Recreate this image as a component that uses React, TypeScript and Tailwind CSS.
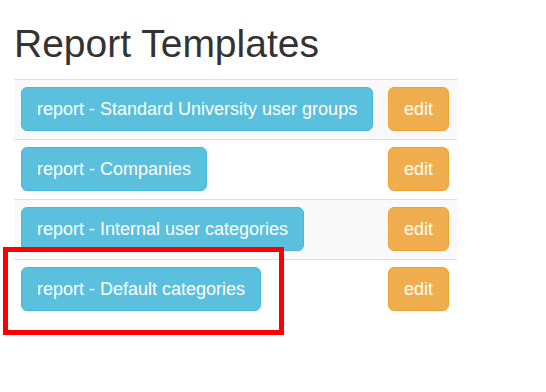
import React from 'react';

const templates = [
  'report - Standard University user groups',
  'report - Companies',
  'report - Internal user categories',
  'report - Default categories',
];

export default function App() {
  return (
    <div className="relative w-[546px] h-[392px] bg-white font-['Liberation_Sans',Arial,sans-serif] text-[#333]">
      <div className="pl-[14px]">
        <h1 className="pt-[22px] mb-[14px] text-[39px] leading-[43px] font-normal text-[#333]">Report Templates</h1>

        <div className="w-[443px]">
          {templates.map((name, i) => (
            <div
              key={name}
              className={`flex items-center justify-between border-t border-[#ddd] pt-[7px] pb-[8px] pl-[7px] pr-[8px] ${i % 2 === 0 ? 'bg-[#f9f9f9]' : 'bg-white'}`}
            >
              <button className="h-[44px] px-[15px] rounded-[6px] border border-[#46b8da] bg-[#5bc0de] text-white text-[18px] leading-[24px] whitespace-nowrap">
                {name}
              </button>
              <button className="h-[44px] w-[61px] rounded-[6px] border border-[#eea236] bg-[#f0ad4e] text-white text-[18px] leading-[24px]">
                edit
              </button>
            </div>
          ))}
        </div>
      </div>

      {/* annotation highlight */}
      <div className="absolute left-[3px] top-[247px] w-[281px] h-[88px] border-[5px] border-[#ff0000]"></div>
    </div>
  );
}
